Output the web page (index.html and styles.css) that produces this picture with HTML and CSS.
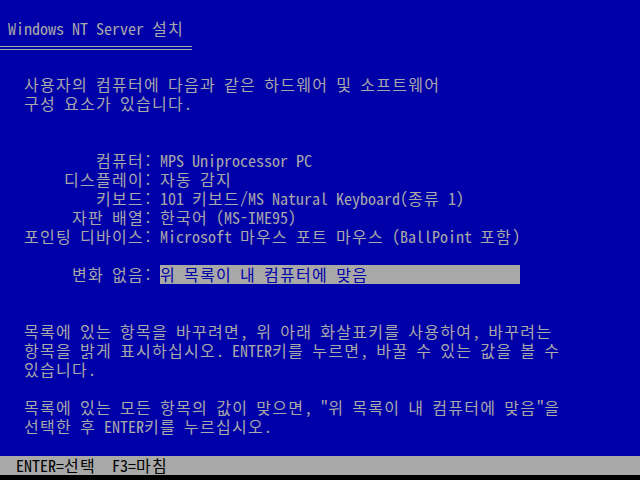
FILE: index.html
```html
<!DOCTYPE html>
<html lang="ko">
<head>
    <meta charset="UTF-8">
    <title>Windows NT Server 설치</title>
    <link rel="stylesheet" href="styles.css">
</head>
<body>

<div class="screen">
    <div class="title">Windows NT Server 설치</div>
    <div class="rule"></div>

    <div class="para intro">
        <div>사용자의 컴퓨터에 다음과 같은 하드웨어 및 소프트웨어</div>
        <div>구성 요소가 있습니다.</div>
    </div>

    <div class="info">
        <span class="label">컴퓨터:</span><span class="value">MPS Uniprocessor PC</span>
        <span class="label">디스플레이:</span><span class="value">자동 감지</span>
        <span class="label">키보드:</span><span class="value">101 키보드/MS Natural Keyboard(종류 1)</span>
        <span class="label">자판 배열:</span><span class="value">한국어 (MS-IME95)</span>
        <span class="label">포인팅 디바이스:</span><span class="value">Microsoft 마우스 포트 마우스 (BallPoint 포함)</span>
        <span class="label gap">변화 없음:</span><span class="value gap selected">위 목록이 내 컴퓨터에 맞음</span>
    </div>

    <div class="para help">
        <div>목록에 있는 항목을 바꾸려면, 위 아래 화살표키를 사용하여, 바꾸려는</div>
        <div>항목을 밝게 표시하십시오. ENTER키를 누르면, 바꿀 수 있는 값을 볼 수</div>
        <div>있습니다.</div>
    </div>

    <div class="para help-2">
        <div>목록에 있는 모든 항목의 값이 맞으면, "위 목록이 내 컴퓨터에 맞음"을</div>
        <div>선택한 후 ENTER키를 누르십시오.</div>
    </div>

    <div class="status">
        <span>ENTER=선택</span>
        <span>F3=마침</span>
    </div>
</div>

<script>
// 한글은 두 칸(16px)을 차지하도록 span.ko 로 감싼다
var walker = document.createTreeWalker(document.querySelector(".screen"), NodeFilter.SHOW_TEXT);
var textNodes = [];
while (walker.nextNode()) {
    textNodes.push(walker.currentNode);
}
textNodes.forEach(function (node) {
    if (!/[가-힣]/.test(node.nodeValue)) {
        return;
    }
    var wrap = document.createElement("span");
    wrap.innerHTML = node.nodeValue.replace(/[가-힣]+/g, '<span class="ko">$&</span>');
    node.parentNode.replaceChild(wrap, node);
});
</script>
</body>
</html>
```

FILE: styles.css
```css
body {
    margin: 0;
    background-color: #000;
}

/* 텍스트 모드 화면: 80칸 x 25줄, 한 칸 8px, 한 줄 19px */
.screen {
    width: 640px;
    height: 475px;
    padding-top: 19px;
    box-sizing: border-box;
    display: flex;
    flex-direction: column;
    background-color: #0000a8;
    color: #a8a8a8;
    font-family: "Noto Sans Mono CJK KR", "Noto Sans CJK KR", monospace;
    font-size: 16px;
    line-height: 19px;
}

/* 한글 글자폭 0.92em -> 16px */
.ko {
    letter-spacing: 1.28px;
}

.title {
    padding-left: 8px;
    white-space: pre;
}

.rule {
    width: 192px;
    height: 2px;
    margin-top: 8px;
    border-top: 1px solid #a8a8a8;
    border-bottom: 1px solid #a8a8a8;
}

.para {
    padding-left: 24px;
}

.para div,
.info span,
.status span {
    white-space: pre;
}

.intro {
    margin-top: 25px;
}

.info {
    display: grid;
    grid-template-columns: 152px 360px;
    column-gap: 8px;
    margin-top: 38px;
}

.label {
    text-align: right;
}

.gap {
    margin-top: 19px;
}

.selected {
    background-color: #a8a8a8;
    color: #0000a8;
}

.help {
    margin-top: 38px;
}

.help-2 {
    margin-top: 19px;
}

.status {
    margin-top: auto;
    display: flex;
    gap: 16px;
    padding-left: 16px;
    background-color: #a8a8a8;
    color: #000;
}
```
